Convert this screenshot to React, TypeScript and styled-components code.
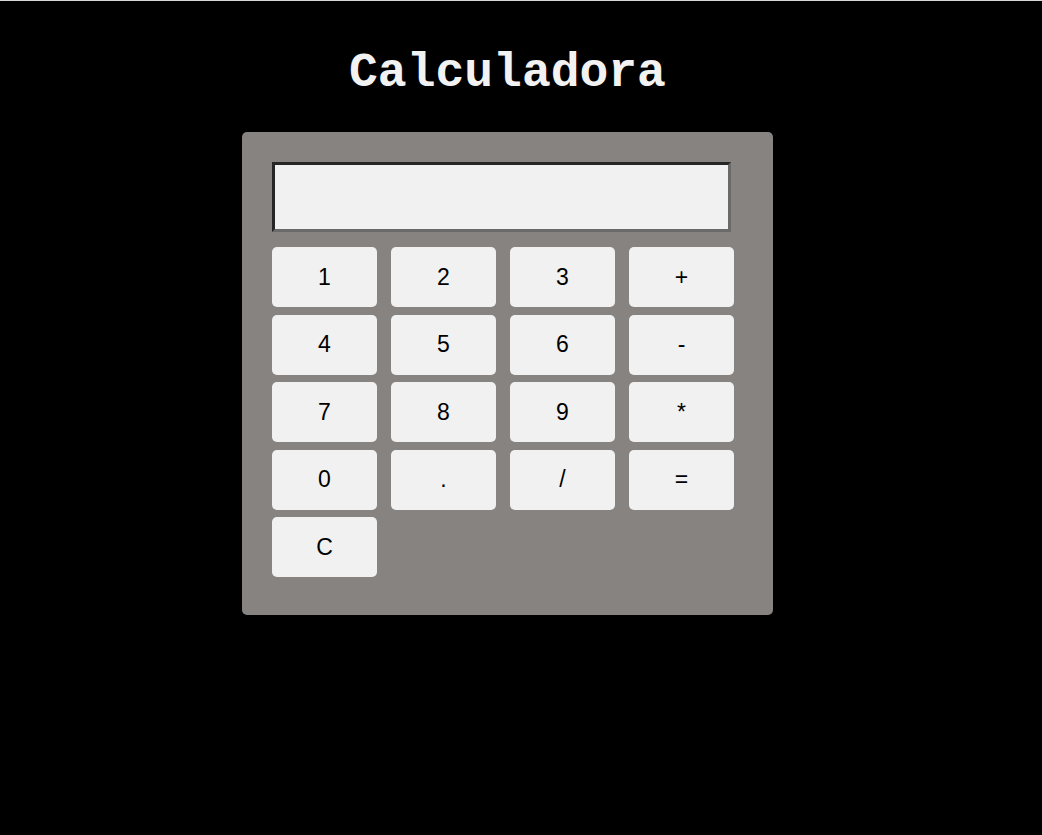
import React, { useState } from "react";
import styled, { createGlobalStyle } from "styled-components";

const Global = createGlobalStyle`
  html, body { margin: 0; padding: 0; background: #000; }
  body { border-top: 1px solid #d8d8d8; font-family: "Liberation Sans", Arial, sans-serif; }
`;

const Page = styled.div`
  width: 1015px;
  display: flex;
  flex-direction: column;
  align-items: center;
`;

const Title = styled.h1`
  margin: 44px 0 0;
  font-family: "Courier New", "Liberation Mono", monospace;
  font-weight: bold;
  font-size: 48px;
  line-height: 56px;
  color: #f2f2f2;
`;

const Calc = styled.div`
  margin-top: 31px;
  width: 531px;
  box-sizing: border-box;
  padding: 30px 30px 38px;
  background: #878381;
  border-radius: 5px;
`;

const Display = styled.input`
  display: block;
  box-sizing: border-box;
  width: 459px;
  height: 70px;
  margin: 0 0 15px;
  background: #f1f1f1;
  border: 3px solid #6a6a6a;
  border-top-color: #262626;
  border-left-color: #262626;
  font-family: "Liberation Sans", Arial, sans-serif;
  font-size: 24px;
  text-align: right;
  padding: 0 10px;
  outline: none;
`;

const Keys = styled.div`
  display: grid;
  grid-template-columns: repeat(4, 105px);
  column-gap: 14px;
  row-gap: 7.5px;
`;

const Key = styled.button`
  height: 60px;
  border: none;
  border-radius: 5px;
  background: #f1f1f1;
  color: #000;
  font-family: "Liberation Sans", Arial, sans-serif;
  font-size: 23px;
  cursor: pointer;
  padding: 0;
`;

const keys = ["1", "2", "3", "+", "4", "5", "6", "-", "7", "8", "9", "*", "0", ".", "/", "=", "C"];

export default function App() {
  const [value, setValue] = useState("");
  const press = (k: string) => {
    if (k === "C") return setValue("");
    if (k === "=") {
      try {
        // eslint-disable-next-line no-new-func
        setValue(String(Function(`return (${value})`)()));
      } catch {
        setValue("Error");
      }
      return;
    }
    setValue((v) => v + k);
  };
  return (
    <>
      <Global />
      <Page>
        <Title>Calculadora</Title>
        <Calc>
          <Display readOnly value={value} />
          <Keys>
            {keys.map((k) => (
              <Key key={k} onClick={() => press(k)}>
                {k}
              </Key>
            ))}
          </Keys>
        </Calc>
      </Page>
    </>
  );
}
